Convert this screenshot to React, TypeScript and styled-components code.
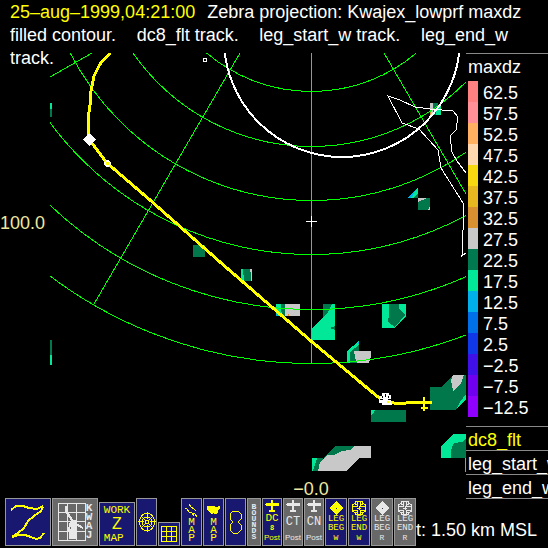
import React from "react";
import styled, { createGlobalStyle } from "styled-components";

const GlobalStyle = createGlobalStyle`
  * { box-sizing: border-box; }
  body {
    margin: 0;
    background: #000;
    color: #fff;
    font-family: "Liberation Sans", Arial, sans-serif;
    font-size: 18px;
    overflow: hidden;
  }
`;

const Page = styled.main`
  display: flex;
  flex-direction: column;
  min-height: 100vh;
`;

const Title = styled.header`
  padding: 1px 12px 0 10px;
  margin-bottom: -17px;
  position: relative;
  z-index: 1;
`;

const TitleLine = styled.div<{ $spread?: boolean }>`
  display: flex;
  line-height: 23px;
  white-space: nowrap;
  gap: 12px;
  ${(p) => (p.$spread ? "justify-content: space-between; padding-right: 28px;" : "")}
`;

const Time = styled.time`
  color: #ffff00;
`;

const Display = styled.div`
  display: grid;
  grid-template-columns: 50px minmax(0, 1fr) 82px;
`;

const AxisLabel = styled.div`
  color: #f0e8a0;
  line-height: 20px;
  height: 20px;
  white-space: nowrap;
`;

const LeftAxis = styled.div`
  display: flex;
  padding-top: 160px;
`;

const Plot = styled.section`
  display: flex;
  flex-direction: column;
  min-width: 0;
`;

const MapDrawing = styled.svg`
  display: block;
  width: 100%;
  shape-rendering: crispEdges;
`;

const AxisFoot = styled.div`
  display: flex;
  justify-content: center;
  padding-left: 106px;
`;

const Side = styled.aside`
  border-top: 1px solid #888;
  overflow: hidden;
`;

const LegendTitle = styled.div`
  padding-left: 2px;
  height: 27px;
  line-height: 27px;
`;

const LegendList = styled.ul`
  list-style: none;
  margin: 0 0 9px;
  padding: 0 0 0 2px;
`;

const LegendRow = styled.li<{ $color: string }>`
  display: flex;
  height: 21px;
  line-height: 24px;
  gap: 5px;
  &::before {
    content: "";
    width: 10px;
    background: ${(p) => p.$color};
  }
`;

const Layer = styled.button<{ $active?: boolean }>`
  display: block;
  width: 100%;
  height: 24px;
  padding: 0 0 0 2px;
  border: 0;
  border-top: 1px solid #888;
  background: none;
  color: ${(p) => (p.$active ? "#ffff00" : "#fff")};
  font: inherit;
  line-height: 26px;
  text-align: left;
  white-space: nowrap;
  overflow: hidden;
  &:last-child { height: 25px; border-bottom: 1px solid #888; }
`;

const Footer = styled.footer`
  display: flex;
  align-items: flex-end;
  padding: 0 0 2px 5px;
  margin-top: -1px;
`;

const Toolbar = styled.nav`
  display: flex;
  align-items: flex-end;
  gap: 1px;
`;

const Tool = styled.button<{ $w: number; $h?: number; $on?: boolean; $row?: boolean }>`
  display: flex;
  flex-direction: ${(p) => (p.$row ? "row" : "column")};
  align-items: center;
  justify-content: center;
  width: ${(p) => p.$w}px;
  height: ${(p) => p.$h ?? 48}px;
  padding: 0;
  border: 1px solid #989898;
  background: ${(p) => (p.$on ? "#181870" : "#686868")};
  color: ${(p) => (p.$on ? "#ffff00" : "#e8e8e8")};
  font-family: "Liberation Mono", monospace;
  overflow: hidden;
  svg { display: block; flex: none; shape-rendering: crispEdges; }
`;

const Glyphs = styled.span<{ $size: number; $line: number; $sans?: boolean; $bold?: boolean }>`
  display: block;
  font-family: ${(p) => (p.$sans ? '"Liberation Sans", sans-serif' : "inherit")};
  font-size: ${(p) => p.$size}px;
  line-height: ${(p) => p.$line}px;
  font-weight: ${(p) => (p.$bold ? 700 : 400)};
  white-space: pre;
  text-align: center;
`;

const Status = styled.output`
  line-height: 32px;
  white-space: nowrap;
`;

const legend: [string, string][] = [
  ["62.5", "#ff8080"], ["57.5", "#ff9098"], ["52.5", "#ffb060"], ["47.5", "#ffd8b0"],
  ["42.5", "#f8d810"], ["37.5", "#e8b820"], ["32.5", "#d89030"], ["27.5", "#c8c8c8"],
  ["22.5", "#007850"], ["17.5", "#00e898"], ["12.5", "#00b0e8"], ["7.5", "#0070e8"],
  ["2.5", "#1038e8"], ["−2.5", "#4010e8"], ["−7.5", "#7000f0"], ["−12.5", "#9000ff"],
];

const DARK = "#00784c";
const BRIGHT = "#00e898";
const GREY = "#c8c8c8";

const echoes: [string, string][] = [
  [BRIGHT, "50,103 52,103 52,109 50,109"],
  [DARK, "50,109 52,109 52,117 50,117"],
  [DARK, "50,340 52,340 52,355 50,355"],
  [BRIGHT, "50,355 52,355 52,365 50,365"],
  [DARK, "193,245 205,245 205,257 193,257"],
  [DARK, "241,269 252,269 252,281 241,281"],
  [BRIGHT, "241,269 243,269 244,281 241,281"],
  [GREY, "250,269 252,269 252,281 251,281 251,272 250,272"],
  [GREY, "276,304 300,304 300,316 276,316"],
  [BRIGHT, "276,304 282,304 284,316 276,316"],
  [DARK, "281,304 285,304 285,316 283,316 281,310"],
  ["#00a8e8", "276,314 278,314 278,316 276,316"],
  ["#d89030", "288,314 289,314 289,316 288,316"],
  [BRIGHT, "323,304 335,304 335,340 312,340 312,328 323,317"],
  [DARK, "323,304 332,304 328,312 323,317"],
  [DARK, "330,328 335,326 335,330"],
  [BRIGHT, "382,304 406,304 406,316 394,328 382,328"],
  [DARK, "389,304 399,304 399,308 405,315 395,327 388,322 389,314"],
  [BRIGHT, "347,351 359,341 359,346 355,351 355,363 347,363"],
  [DARK, "350,352 359,345 359,351 356,354 357,363 350,363"],
  [GREY, "354,351 371,351 371,357 369,363 357,363 355,357"],
  ["#00a8e8", "357,343 359,341 359,344"],
  [DARK, "371,410 406,410 406,422 371,422"],
  [BRIGHT, "371,410 375,410 374,413 371,415"],
  [DARK, "430,387 441,387 453,375 466,375 466,410 430,410"],
  ["#000", "466,399 455,410 466,410"],
  [BRIGHT, "466,394 466,399 456,410 460,402"],
  [GREY, "453,375 464,375 461,384 453,391 451,380"],
  [BRIGHT, "441,446 453,434 466,434 466,458 441,458"],
  [DARK, "451,458 451,450 454,443 462,442 466,439 466,458"],
  [BRIGHT, "465,458 466,458 466,472 465,472"],
  [DARK, "323,458 335,446 360,446 345,458"],
  [DARK, "312,458 323,458 323,471 312,471"],
  [BRIGHT, "312,458 317,458 313,471 312,471"],
  [GREY, "355,446 371,446 371,458 359,458 347,471 318,471 320,462 328,455 334,455 342,451 350,450"],
  [GREY, "430,103 433,103 433,115 430,115"],
  [DARK, "433,103 438,103 438,115 433,115"],
  [BRIGHT, "436,108 441,103 441,115 436,115"],
  ["#d89030", "430,111 431,111 431,115 430,115"],
  [BRIGHT, "407,198 418,187 418,198"],
  ["#00b0e8", "407,198 418,187 411,198"],
  [DARK, "413,198 418,193 418,198"],
  [DARK, "418,198 430,198 430,210 418,210"],
  [GREY, "418,198 427,198 418,202"],
  [GREY, "430,206 430,210 428,210"],
];

const WeatherMap = () => (
  <MapDrawing viewBox="50 53 416 426" role="img" aria-label="maxdz filled contour with flight track">
    {echoes.map(([fill, points], i) => (
      <polygon key={i} fill={fill} points={points} />
    ))}
    <g fill="none" stroke="#00ff00">
      {[162, 217, 271, 325, 380, 434].map((r) => (
        <circle key={r} cx="311.5" cy="-70.5" r={r} />
      ))}
      <path d="M311.5 53V363M240 53L94 304M92 53L50 77M384 53L466 194" />
    </g>
    <path d="M306 221.5H317M311.5 216V227" stroke="#fff" />
    <g fill="none" stroke="#fff">
      <path d="M466 173L457 161L452 152L450 136L456 130L458 117L453 111L430 109L415 107L400 100L388 96L402 123L419 129L438 150L441 168L463 203V230L462 256L466 253" />
      <path d="M202.500 58.500H206.500V61.500H203.500V59" />
      <circle cx="342" cy="39" r="118" strokeWidth="2" />
    </g>
    <path d="M110 53L100 64L94 76L91 91L90 105L88 120V138L107 163L150 200L220 262L311 341L372 392L383 401L400 404L412 402L432 402" fill="none" stroke="#ffff00" strokeWidth="3" />
    <path d="M424 397V411M421 408H428" stroke="#ffff00" strokeWidth="2" />
    <path d="M89 133L96 139.500L89 146L83 139.500Z" fill="#fff" />
    <circle cx="107.500" cy="163.500" r="2.500" fill="#ffff00" stroke="#fff" strokeWidth="1.500" />
    <path d="M382 393H389V395H391V403H392V405H382V403H379V396H382Z" fill="#fff" />
    <path d="M385.500 394V397M380 399.500H383M388 399.500H391M382.500 396V398M388.500 396V398" stroke="#000" fill="none" />
    <path d="M387 401h2v2h-2z" fill="#ffff00" />
  </MapDrawing>
);

const Plane = () => (
  <svg width="14" height="13" viewBox="0 0 14 13" fill="currentColor" aria-hidden="true">
    <path d="M6 0H8V3H13L14 4V5L13 6H8V10H10V12H4V10H6V6H1L0 5V4L1 3H6Z" />
  </svg>
);

const Diamond = () => (
  <svg width="14" height="14" viewBox="0 0 14 14" aria-hidden="true">
    <path d="M7 0L14 7L7 14L0 7Z" fill="currentColor" />
    <path d="M7 7H8V8H7Z" fill="#383850" />
  </svg>
);

const RoundCross = () => (
  <svg width="14" height="14" viewBox="0 0 14 14" fill="none" stroke="currentColor" aria-hidden="true">
    <path d="M4 .500H10L11 2.500L13.500 4V10L11 11.500L10 13.500H4L3 11.500L.500 10V4L3 2.500Z" />
    <path d="M5.500 1V5H1M8.500 1V5H13M5.500 13V9H1M8.500 13V9H13M3 3H5M9 3H11M3 11H5M9 11H11M7 5V9M5 7H9" />
  </svg>
);

const ZebraIcon = () => (
  <svg width="42" height="42" viewBox="0 0 42 42" fill="none" stroke="currentColor" aria-hidden="true">
    <path d="M4 9L9 5H16L22 7L30 8L36 5M5 36L11 34H18L24 36L29 38L33 37L37 32" strokeWidth="2" />
    <path d="M36 6L34 10L27 15L21 20L17 27L11 32L5 36" strokeWidth="2" />
  </svg>
);

const AtollIcon = () => (
  <svg width="28" height="38" viewBox="0 0 28 38" fill="none" stroke="currentColor" aria-hidden="true">
    <path d="M.500 .500H28M.500 9.500H28M.500 18.500H28M.500 28.500H28M.500 37.500H28M.500 0V38M9.500 0V38M18.500 0V38M27.500 0V38" />
    <path d="M8 3V8L14 17L18 21L25 25M14 17L12 21L11 28" strokeWidth="2" />
    <path d="M14 17H17L18 26V35H11V29L13 26Z" fill="currentColor" />
  </svg>
);

const RadarIcon = () => (
  <svg width="18" height="20" viewBox="0 0 18 20" fill="none" stroke="currentColor" aria-hidden="true">
    <ellipse cx="9" cy="10" rx="7.500" ry="9" />
    <circle cx="9" cy="10" r="5" />
    <circle cx="9" cy="10" r="2" />
    <path d="M9 0V7M9 13V20M0 9.500H6M12 9.500H18M3 4L7 8M15 4L11 8M3 16L7 12M15 16L11 12" />
  </svg>
);

const GridIcon = () => (
  <svg width="16" height="16" viewBox="0 0 16 16" fill="none" stroke="currentColor" aria-hidden="true">
    <path d="M.500 .500H15.500V15.500H.500ZM5.500 0V16M10.500 0V16M0 5.500H16M0 10.500H16" />
  </svg>
);

const IslandsIcon = () => (
  <svg width="15" height="15" viewBox="0 0 15 15" fill="none" stroke="currentColor" aria-hidden="true">
    <path d="M1 5L3 6L5 9L8 10L10 13M5 1L7 4L10 6L12 8M9 10L11 11L13 14" />
  </svg>
);

const StatesIcon = () => (
  <svg width="15" height="15" viewBox="0 0 15 15" fill="currentColor" aria-hidden="true">
    <path d="M1 3H8L10 4L14 3V6L12 7V9L11 11H9L7 10L6 12L4 9L2 8L1 6Z" />
  </svg>
);

const LobesIcon = () => (
  <svg width="14" height="24" viewBox="0 0 14 24" fill="none" stroke="currentColor" aria-hidden="true">
    <path d="M4 12L1 9V4L4 1H9L12 4V9L9 12L12 15V20L9 23H4L1 20V15L4 12" />
  </svg>
);

const PlaneTool = ({ on, name }: { on?: boolean; name: string }) => (
  <Tool $w={20} $on={on}>
    <Plane />
    {on ? (
      <>
        <Glyphs $size={11} $line={11}>{name}</Glyphs>
        <Glyphs $size={7} $line={8} $bold>8</Glyphs>
      </>
    ) : (
      <Glyphs $size={12} $line={19}>{name}</Glyphs>
    )}
    <Glyphs $size={8} $line={12} $sans>Post</Glyphs>
  </Tool>
);

const LegTool = ({ on, kind, mark }: { on?: boolean; kind: "BEG" | "END"; mark: string }) => (
  <Tool $w={22} $on={on}>
    {kind === "BEG" ? <Diamond /> : <RoundCross />}
    <Glyphs $size={9} $line={9}>{"LEG\n" + kind}</Glyphs>
    <Glyphs $size={8} $line={10}>{mark}</Glyphs>
  </Tool>
);

export default function App() {
  return (
    <Page>
      <GlobalStyle />
      <Title>
        <TitleLine>
          <Time>25–aug–1999,04:21:00</Time>
          <span>Zebra projection: Kwajex_lowprf maxdz</span>
        </TitleLine>
        <TitleLine $spread>
          <span>filled contour.</span>
          <span>dc8_flt track.</span>
          <span>leg_start_w track.</span>
          <span>leg_end_w</span>
        </TitleLine>
        <TitleLine>track.</TitleLine>
      </Title>
      <Display>
        <LeftAxis>
          <AxisLabel>100.0</AxisLabel>
        </LeftAxis>
        <Plot>
          <WeatherMap />
          <AxisFoot>
            <AxisLabel>−0.0</AxisLabel>
          </AxisFoot>
        </Plot>
        <Side>
          <LegendTitle>maxdz</LegendTitle>
          <LegendList>
            {legend.map(([label, color]) => (
              <LegendRow key={label} $color={color}>{label}</LegendRow>
            ))}
          </LegendList>
          <Layer $active>dc8_flt</Layer>
          <Layer>leg_start_w</Layer>
          <Layer>leg_end_w</Layer>
        </Side>
      </Display>
      <Footer>
        <Toolbar aria-label="Tools">
          <Tool $w={46} $on aria-label="Zebra"><ZebraIcon /></Tool>
          <Tool $w={46} $row>
            <AtollIcon />
            <Glyphs $size={11} $line={9} $bold>{"K\nW\nA\nJ"}</Glyphs>
          </Tool>
          <Tool $w={36} $h={44} $on>
            <Glyphs $size={11} $line={12}>WORK</Glyphs>
            <Glyphs $size={16} $line={16} $sans>Z</Glyphs>
            <Glyphs $size={11} $line={12}>{"MAP "}</Glyphs>
          </Tool>
          <Tool $w={21} $on aria-label="Radar"><RadarIcon /></Tool>
          <Tool $w={22} $h={24} $on aria-label="Grid"><GridIcon /></Tool>
          <Tool $w={21} $on>
            <IslandsIcon />
            <Glyphs $size={11} $line={8}>{"M\nA\nP"}</Glyphs>
          </Tool>
          <Tool $w={21} $on>
            <StatesIcon />
            <Glyphs $size={11} $line={8}>{"M\nA\nP"}</Glyphs>
          </Tool>
          <Tool $w={21} $on aria-label="Lobes"><LobesIcon /></Tool>
          <Tool $w={14}>
            <Glyphs $size={8} $line={6} $bold>{"B\nO\nU\nN\nD\nS"}</Glyphs>
          </Tool>
          <PlaneTool on name="DC" />
          <PlaneTool name="CT" />
          <PlaneTool name="CN" />
          <LegTool on kind="BEG" mark="W" />
          <LegTool on kind="END" mark="W" />
          <LegTool kind="BEG" mark="R" />
          <LegTool kind="END" mark="R" />
        </Toolbar>
        <Status>t: 1.50 km MSL</Status>
      </Footer>
    </Page>
  );
}
